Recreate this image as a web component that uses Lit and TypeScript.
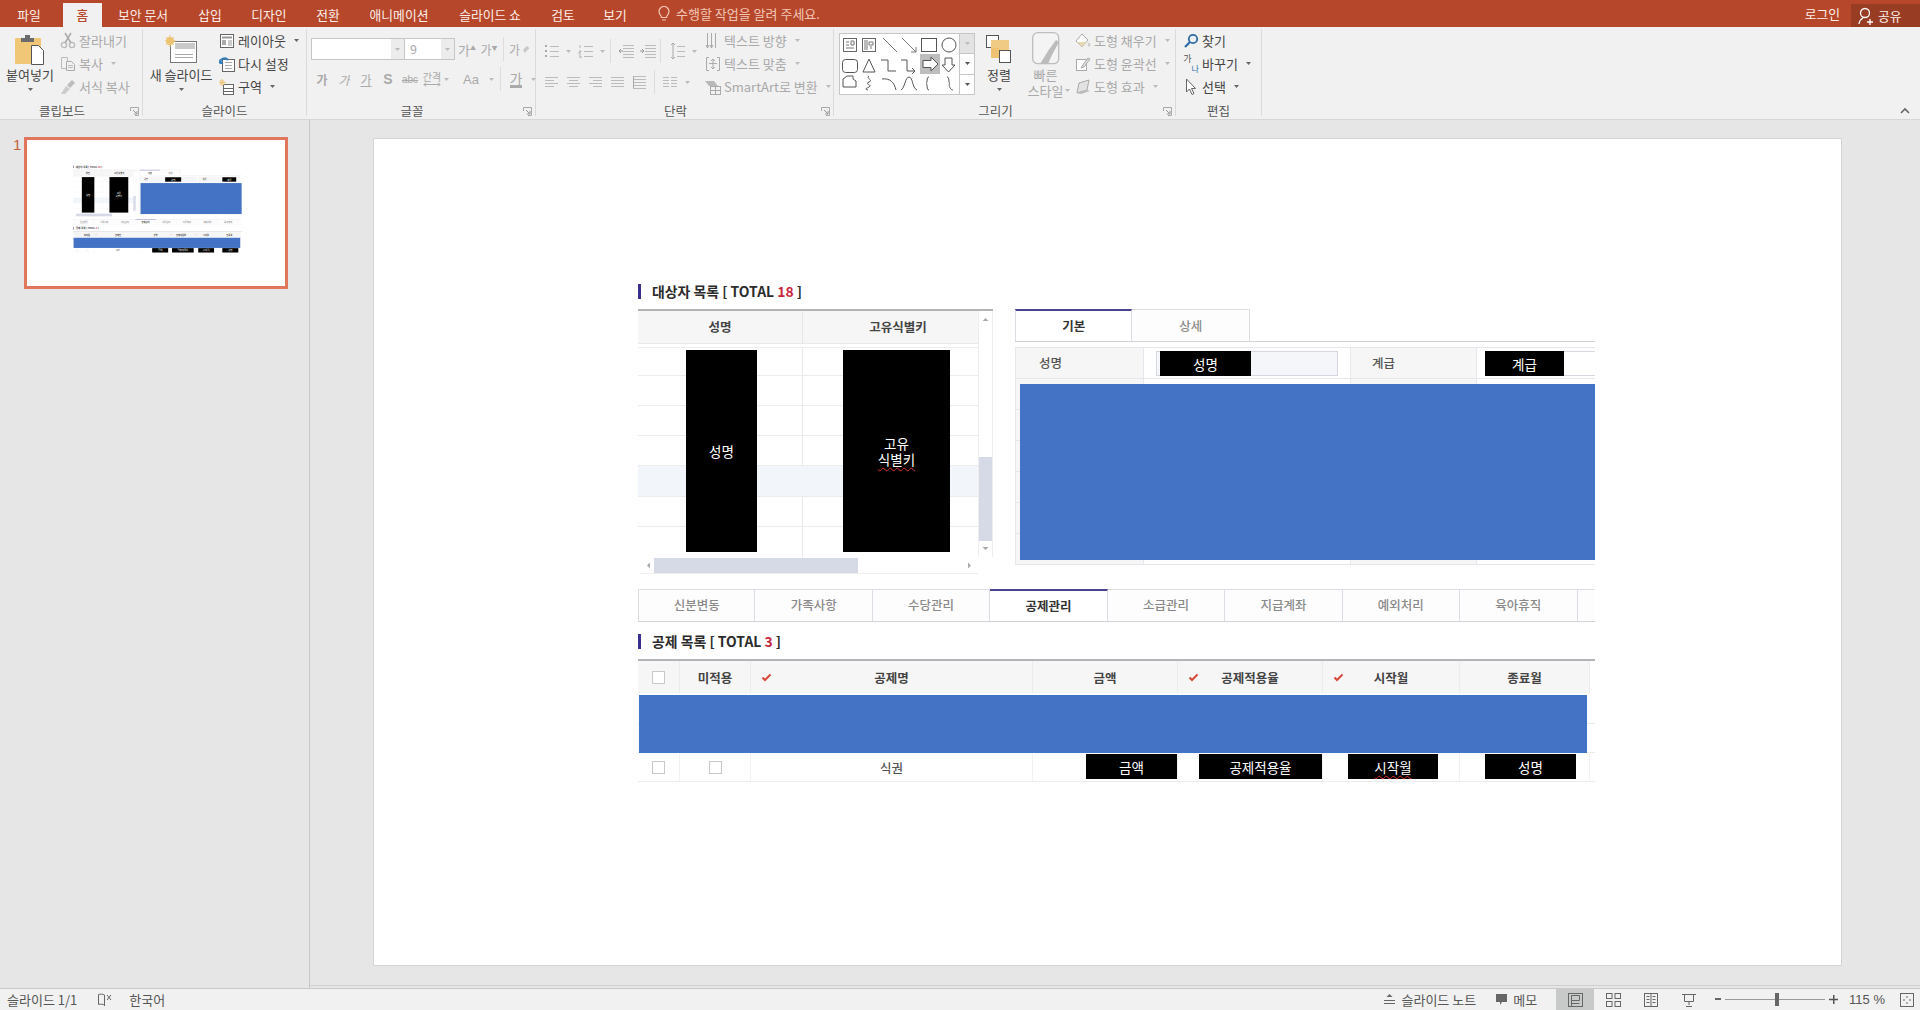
import { LitElement, html, svg, css } from "lit";
import { customElement } from "lit/decorators.js";

const caret = (c = "#888") => html`<svg class="caret" width="7" height="5" viewBox="0 0 7 5"><path d="M1 1h5L3.5 4z" fill=${c}/></svg>`;
const ic = (w: number, h: number, body: unknown) => html`<svg width=${w} height=${h} viewBox="0 0 ${w} ${h}" fill="none">${body}</svg>`;
const lines = (ys: number[], x1: number, x2: number, c = "#aaa") => ys.map((y) => svg`<path d="M${x1} ${y}.5H${x2}" stroke=${c}/>`);

const launcher = html`<svg class="launcher" width="9" height="9" viewBox="0 0 9 9" fill="none"><path d="M.5 4V.5H8.5V8.5H5" stroke="#aaa"/><path d="M3 3l4 4M4 7h3V4" stroke="#999"/></svg>`;

const icons = {
  paste: ic(30, 31, svg`<rect x="0" y="4" width="26" height="26" rx="1" fill="#efc777"/><path d="M6 4h4V1h5v3h4v4H6z" fill="#6b6b6b"/><path d="M16.5 11.5h7l5 5v14h-12z" fill="#fff" stroke="#555"/>`),
  cut: ic(16, 17, svg`<circle cx="4" cy="13" r="2.6" stroke="#bbb" stroke-width="1.4"/><circle cx="12" cy="13" r="2.6" stroke="#bbb" stroke-width="1.4"/><path d="M5 11L11 1M11 11L5 1" stroke="#aaa" stroke-width="1.5"/>`),
  copy: ic(16, 16, svg`<path d="M1.5 1.5h6v11h-6z" stroke="#bbb"/><path d="M6.5 5.5h5l3 3v6h-8z" fill="#f1f1f1" stroke="#aaa"/><path d="M8 9.5h5M8 11.5h5" stroke="#bbb"/>`),
  brush: ic(16, 16, svg`<path d="M1 15l5-8 4 3-5 5z" fill="#ccc"/><path d="M7 6l5-5 3 3-5 5z" fill="#bdbdbd"/>`),
  newSlide: ic(32, 30, svg`<rect x="5.5" y="6.5" width="26" height="21" fill="#fff" stroke="#777"/><rect x="10" y="8" width="20" height="6" fill="#c9c9c9"/><path d="M10 19.5h18M10 22.5h18" stroke="#aaa"/><circle cx="5" cy="6" r="4" fill="#eec270"/><path d="M5 0v12M-1 6h12M1 2l8 8M9 2l-8 8" stroke="#eec270"/>`),
  layout: ic(16, 16, svg`<rect x="1.5" y="1.5" width="13" height="13" fill="#fff" stroke="#666"/><path d="M3 4.5h10" stroke="#999" stroke-width="2"/><path d="M3 7h4v5H3z" fill="#aaa"/><path d="M9 8h4M9 10h4M9 12h4" stroke="#999"/>`),
  reset: ic(16, 16, svg`<rect x="3.5" y="3.5" width="12" height="12" fill="#fff" stroke="#666"/><path d="M6 6.5h7M6 9.5h7M6 12.5h7" stroke="#aaa"/><path d="M1 7a4.5 4.5 0 0 1 8-3" stroke="#2f7fbf" stroke-width="2"/><path d="M.5 3v5h4z" fill="#2f7fbf"/>`),
  section: ic(16, 16, svg`<rect x="4.5" y="5.5" width="10" height="10" fill="#fff" stroke="#666"/><path d="M4 9.5h11M4 12.5h11" stroke="#666"/><path d="M3 0v7M0 3.5h7M1 1l4 5M5 1L1 6" stroke="#eec270"/>`),
  dirText: ic(16, 18, svg`<path d="M2.5 1v15M6.5 1v15M10.5 1v15" stroke="#aaa"/><path d="M1 13l1.5 3L4 13M5 13l1.5 3L8 13" stroke="#aaa"/>`),
  fitText: ic(16, 16, svg`<path d="M4 1.5H1.5v13H4M12 1.5h2.5v13H12" stroke="#aaa"/><path d="M8 3v10M6 5l2-2 2 2M6 11l2 2 2-2M4 7.5h8" stroke="#aaa"/>`),
  smartArt: ic(16, 16, svg`<path d="M0 2h9l4 5H4z" fill="#b9b9b9"/><rect x="5.5" y="7.5" width="10" height="8" fill="#f1f1f1" stroke="#aaa"/><path d="M6 11.5h9M10.5 8v7" stroke="#aaa"/>`),
  fill: ic(16, 16, svg`<path d="M7 1l6 6-6 7-6-6z" fill="#fff" stroke="#aaa"/><path d="M2 9h10l-5 5z" fill="#e7d7b3"/><path d="M14 9l1.5 3a1.5 1.5 0 1 1-3 0z" fill="#ccc"/>`),
  outline: ic(16, 16, svg`<rect x="1.5" y="3.5" width="10" height="11" stroke="#aaa" fill="#fff"/><path d="M7 10l6-8 2 1-6 8-3 1z" fill="#ddd" stroke="#aaa"/>`),
  effect: ic(16, 16, svg`<path d="M2 14l2-10 10-3-2 10z" fill="#e2e2e2" stroke="#aaa"/><path d="M2 14l10-3 3 1-9 3z" fill="#bbb"/>`),
  find: ic(16, 16, svg`<circle cx="10" cy="6" r="4.2" stroke="#2a6aa8" stroke-width="1.8"/><path d="M7 9l-5 5" stroke="#2a6aa8" stroke-width="2.2"/>`),
  replace: html`<span class="rp"><span class="rp1">가</span><span class="rp2">나</span></span>`,
  select: ic(16, 18, svg`<path d="M3.5 1v13l3-3 2.5 5.5 2-1-2.5-5h4z" fill="#fff" stroke="#666"/>`),
  order: ic(26, 30, svg`<rect x=".5" y=".5" width="12" height="12" fill="#fff" stroke="#555"/><rect x="5" y="5" width="18" height="18" fill="#f0cb84" /><rect x="13.5" y="15.5" width="11" height="12" fill="#fff" stroke="#555"/><rect x="5" y="13" width="8" height="10" fill="#eec270"/>`),
  quick: ic(28, 33, svg`<rect x=".7" y=".7" width="26" height="31" rx="5" fill="#f4f4f4" stroke="#bdbdbd" stroke-width="1.3"/><path d="M8 32l8-13 8-11 3 2-7 13-4 9z" fill="#bcbcbc"/>`),
};

const alignIc = (kind: string) => {
  const short = kind === "l" ? [0, 9] : kind === "c" ? [2, 11] : kind === "r" ? [4, 13] : [0, 13];
  const rows = [[0, 13], short, [0, 13], short];
  return ic(13, 12, rows.map((r, i) => svg`<path d="M${r[0]} ${i * 3 + 1}.5H${r[1]}" stroke="#bbb"/>`));
};

const para = {
  bullets: ic(15, 14, svg`<path d="M1 2h2M1 7h2M1 12h2" stroke="#aaa" stroke-width="2"/><path d="M6 2.5h9M6 7.5h9M6 12.5h9" stroke="#bbb"/>`),
  numbers: ic(15, 14, svg`<path d="M2 1v3M1 7h2v1H1v2h2M1 12h2v2H1" stroke="#aaa" stroke-width=".8"/><path d="M6 2.5h9M6 7.5h9M6 12.5h9" stroke="#bbb"/>`),
  outdent: ic(16, 14, svg`${lines([1, 4, 7, 10, 13], 5, 16, "#bbb")}<path d="M5 7H1m2-2L1 7l2 2" stroke="#999"/>`),
  indent: ic(16, 14, svg`${lines([1, 4, 7, 10, 13], 5, 16, "#bbb")}<path d="M0 7h4M2 5l2 2-2 2" stroke="#999"/>`),
  spacing: ic(15, 18, svg`<path d="M3 1v16M1 3l2-2 2 2M1 15l2 2 2-2" stroke="#aaa"/><path d="M7 4.5h8M7 9.5h8M7 14.5h8" stroke="#bbb"/>`),
  columns: ic(14, 12, svg`${lines([1, 4, 7, 10], 0, 6, "#bbb")}${lines([1, 4, 7, 10], 8, 14, "#bbb")}`),
  dist: ic(13, 14, svg`${lines([1, 4, 7, 10, 13], 0, 13, "#bbb")}<path d="M.5 1v12" stroke="#aaa"/>`),
};

const gallery = svg`
  <rect x="81" y="21" width="20" height="20" fill="#bdbdbd"/>
  <rect x="4.5" y="5.5" width="13" height="13" stroke="#666"/><path d="M7 9h3M7 12h3M7 15h8M12 8h3v4h-3z" stroke="#777"/>
  <rect x="23.5" y="5.5" width="13" height="13" stroke="#666"/><path d="M26 7v10M28 7v10M30 9h4v3h-4zM32 13v3" stroke="#777"/>
  <path d="M44 5l14 14" stroke="#777"/>
  <path d="M63 5l14 14M72 19h5v-5" stroke="#777"/>
  <rect x="82.5" y="5.5" width="15" height="13" stroke="#555"/>
  <circle cx="110" cy="12" r="7" stroke="#555"/>
  <rect x="3.5" y="26.5" width="15" height="13" rx="3" stroke="#555"/>
  <path d="M30 26l6 13H24z" stroke="#555"/>
  <path d="M42 27h7v11h8" stroke="#555"/>
  <path d="M62 27h6v11h7M73 35l3 3-3 3" stroke="#555"/>
  <path d="M84 27.5h8V24l7 7-7 7v-3.5h-8z" fill="#fff" stroke="#555"/>
  <path d="M106 25h7v7h3l-6.500 7-6.500-7h3z" stroke="#555"/>
  <path d="M4 54v-8l4-3h6v3l3 2v6z" stroke="#555"/>
  <path d="M30 43c-4 2 5 4 0 6s4 3 0 5-4 2-1 3" stroke="#555"/>
  <path d="M43 46c8-1 12 3 14 11" stroke="#555"/>
  <path d="M62 57c4-2 4-13 8-13s3 11 8 13" stroke="#555"/>
  <path d="M90 44c-3 0-1 6-3 6.500 2 .5 0 6.500 3 6.500" stroke="#555"/>
  <path d="M108 44c3 0 1 6 3 6.500-2 .5 0 6.500 3 6.500" stroke="#555"/>
`;

@customElement("slide-body")
class SlideBody extends LitElement {
  static styles = css`
    :host { display: block; width: 1467px; height: 826px; background: #fff; padding: 142px 0 0 264px; box-sizing: border-box; font-family: "Noto Sans CJK KR", "Noto Sans", sans-serif; color: #333; }
    .content { width: 957px; }
    .title { display: flex; align-items: center; height: 20px; gap: 11px; font-size: 13.900px; font-weight: 700; color: #2b2b2b; white-space: pre; }
    .title::before { content: ""; width: 3px; height: 15px; background: #38308a; }
    .title em { font-style: normal; color: #c8283f; }
    .title.t2 { margin-top: 9px; }
    .top { display: flex; gap: 22px; margin-top: 8px; height: 264px; }
    .list { position: relative; width: 355px; flex: none; border-top: 2px solid #b4b4b4; display: grid; grid-template-columns: 340px 15px; grid-template-rows: 246px 17px; box-sizing: border-box; height: 264px; }
    .list-body { display: flex; flex-direction: column; background: linear-gradient(#e8e8e8, #e8e8e8) 164px 0 / 1px 100% no-repeat; }
    .list-head { display: grid; grid-template-columns: 164px 176px; height: 32px; background: #f6f6f6; border-bottom: 1px solid #e9e9e9; font-size: 12.5px; font-weight: 700; color: #444; text-align: center; line-height: 31px; box-shadow: 0 3px 0 #fff, 0 4px 0 #eee; }
    .list-head span + span { border-left: 1px solid #e6e6e6; padding-left: 15px; }
    .list-row { height: 30px; box-sizing: border-box; border-bottom: 1px solid #ececec; flex: none; }
    .list-row.first { height: 32px; }
    .list-row.sel { background: #f2f6fb; height: 31px; }
    .vs { background: #fff; border: 1px solid #eee; border-width: 0 1px; display: flex; flex-direction: column; align-items: center; justify-content: space-between; position: relative; padding: 6px 0; box-sizing: border-box; }
    .vs i { position: absolute; left: 0; right: 0; top: 146px; height: 84px; background: #d5dae6; }
    .hs { background: #fff; border-bottom: 1px solid #eee; display: flex; align-items: center; margin-left: 2px; position: relative; }
    .hs i { display: block; height: 15px; width: 204px; margin-left: 14px; background: #d5dae6; }
    .hs svg { position: absolute; }
    .hs svg.a { left: 6px; } .hs svg.b { right: 6px; }
    .mask { position: absolute; background: #000; color: #fff; font-size: 13.500px; display: flex; align-items: center; justify-content: center; text-align: center; line-height: 16px; }
    .m1 { left: 48px; top: 39px; width: 71px; height: 202px; }
    .m2 { left: 205px; top: 39px; width: 107px; height: 202px; }
    .sq { text-decoration: underline wavy #e0322a 1px; text-underline-offset: 2px; }
    .right { width: 580px; flex: none; position: relative; }
    .tabs { display: flex; height: 33px; box-sizing: border-box; border-bottom: 1px solid #d2d2d8; font-size: 12.5px; color: #8a8a8a; font-weight: 500; }
    .tab { flex: none; box-sizing: border-box; border: 1px solid #dcdce4; border-bottom: 0; border-left-width: 0; text-align: center; line-height: 31px; background: #fdfdfd; }
    .tab:first-child { border-left-width: 1px; }
    .tab.on { border-top: 2px solid #4b4590; color: #333; font-weight: 700; background: #fff; line-height: 30px; }
    .tab.w { width: 117.450px; }
    .tab.filler { flex: 1; border-right: 0; }
    .form { position: relative; margin-top: 5px; border-top: 1px solid #e6e6ec; }
    .frow { display: grid; grid-template-columns: 129px 206px 127px 118px; height: 31px; box-sizing: border-box; border-bottom: 1px solid #e6e6ec; font-size: 12.5px; font-weight: 500; color: #555; }
    .lab { background: #f6f6f6; line-height: 30px; padding-left: 23px; border-left: 1px solid #e9e9e9; border-right: 1px solid #e6e6ec; }
    .lab.l2 { padding-left: 21px; }
    .val { padding: 3px 0 0 12px; }
    .val .inp { display: block; height: 25px; width: 182px; box-sizing: border-box; border: 1px solid #d5d6e2; background: #f5f6fa; position: relative; }
    .val.v2 { padding-left: 8px; }
    .val.v2 .inp { width: 110px; border-width: 1px 0; background: #fff; }
    .inline-mask { position: absolute; left: 3px; top: -1px; bottom: -1px; background: #000; color: #fff; font-size: 13.500px; font-weight: 400; display: flex; align-items: center; justify-content: center; }
    .im1 { width: 91px; } .im2 { left: 0; width: 79px; }
    .form .blue { position: absolute; left: 5px; top: 36px; width: 575px; height: 176px; background: #4472c4; }
    .tabs2 { margin-top: 16px; color: #8a8a8a; }
    .tabs2 .tab { line-height: 30px; }
    .table { margin-top: 8px; border-top: 2px solid #b4b4b8; }
    .trow { display: grid; grid-template-columns: 42px 71px 282px 145px 145px 137px 130px; font-size: 12.500px; color: #444; }
    .thead { height: 32px; background: #f6f6f6; font-weight: 700; width: 952px; margin-bottom: 2px; }
    .thead > div { display: flex; align-items: center; justify-content: center; border-right: 1px solid #ececec; position: relative; }
    .tk { position: absolute; top: 12px; left: 10px; }
    .tbody { position: relative; }
    .tbody .blue { position: absolute; left: 1px; top: 0; width: 948px; height: 58px; background: #4472c4; }
    .tbr { height: 29px; box-sizing: border-box; border-bottom: 1px solid #ececec; width: 957px; }
    .tbr > div { display: flex; align-items: center; justify-content: center; border-right: 1px solid #f1f1f1; }
    .tbr > div.box { justify-content: flex-start; }
    .box .bm { display: flex; align-items: center; justify-content: center; height: 25px; background: #000; color: #fff; font-size: 13.500px; margin-top: -1px; }
    .cb { width: 13px; height: 13px; box-sizing: border-box; border: 1px solid #c9c9c9; background: #fff; box-shadow: inset 0 0 1px #eee; }
    .cell-name { font-weight: 500; color: #555; }
  `;
  render() {
    const chk = html`<svg class="tk" width="11" height="9" viewBox="0 0 11 9"><path d="M1.500 4.500L4 7l5.500-5.500" stroke="#d8493a" stroke-width="2" fill="none"/></svg>`;
    const arrow = (d: string) => html`<svg width="7" height="5" viewBox="0 0 7 5"><path d=${d} fill="#aaa"/></svg>`;
    const boxes = [
      { t: "금액", ml: 53, w: 91 },
      { t: "공제적용율", ml: 21, w: 124 },
      { t: "시작월", ml: 25, w: 90, sq: true },
      { t: "성명", ml: 25, w: 91 },
    ];
    const w2 = ["신분변동", "가족사항", "수당관리", "공제관리", "소급관리", "지급계좌", "예외처리", "육아휴직"];
    return html`<div class="content">
      <div class="title"><span>대상자 목록 [ TOTAL <em>18</em> ]</span></div>
      <div class="top">
        <div class="list">
          <div class="list-body">
            <div class="list-head"><span>성명</span><span>고유식별키</span></div>
            <div class="list-row first"></div><div class="list-row"></div><div class="list-row"></div><div class="list-row"></div>
            <div class="list-row sel"></div><div class="list-row"></div>
          </div>
          <div class="vs"><i></i>${arrow("M3.500 1l3 3H.5z")}${arrow("M.5 1h6l-3 3z")}</div>
          <div class="hs"><svg class="a" width="5" height="7" viewBox="0 0 5 7"><path d="M4 .5v6L1 3.500z" fill="#aaa"/></svg><i></i><svg class="b" width="5" height="7" viewBox="0 0 5 7"><path d="M1 .5v6l3-3z" fill="#aaa"/></svg></div>
          <div></div>
          <div class="mask m1">성명</div>
          <div class="mask m2"><div>고유<br><span class="sq">식별키</span></div></div>
        </div>
        <div class="right">
          <div class="tabs">
            <div class="tab on w">기본</div><div class="tab w">상세</div>
          </div>
          <div class="form">
            <div class="frow"><div class="lab">성명</div><div class="val"><span class="inp"><span class="inline-mask im1">성명</span></span></div><div class="lab l2">계급</div><div class="val v2"><span class="inp"><span class="inline-mask im2">계급</span></span></div></div>
            ${[0, 1, 2, 3, 4, 5].map(() => html`<div class="frow"><div class="lab"></div><div class="val"></div><div class="lab"></div><div class="val"></div></div>`)}
            <div class="blue"></div>
          </div>
        </div>
      </div>
      <div class="tabs tabs2">
        ${w2.map((t, i) => html`<div class="tab w ${i === 3 ? "on" : ""}">${t}</div>`)}
        <div class="tab filler"></div>
      </div>
      <div class="title t2"><span>공제 목록 [ TOTAL <em>3</em> ]</span></div>
      <div class="table">
        <div class="trow thead">
          <div><span class="cb"></span></div><div>미적용</div>
          <div>${chk}공제명</div><div>금액</div>
          <div>${chk}공제적용율</div>
          <div>${chk}시작월</div><div>종료월</div>
        </div>
        <div class="tbody">
          <div class="tbr"></div><div class="tbr"></div>
          <div class="trow tbr">
            <div><span class="cb"></span></div><div><span class="cb"></span></div><div class="cell-name">식권</div>
            ${boxes.map((b) => html`<div class="box"><div class="bm" style="margin-left:${b.ml}px;width:${b.w}px"><span class=${b.sq ? "sq" : ""}>${b.t}</span></div></div>`)}
          </div>
          <div class="blue"></div>
        </div>
      </div>
    </div>`;
  }
}

const row = (icon: unknown, text: string, opts: { off?: boolean; caret?: boolean } = {}) => html`<div class="r ${opts.off ? "off" : ""}"><span class="ri">${icon}</span><span>${text}</span>${opts.caret ? caret(opts.off ? "#bbb" : "#666") : ""}</div>`;

@customElement("app-root")
class AppRoot extends LitElement {
  static styles = css`
    :host { display: flex; flex-direction: column; width: 1920px; height: 1010px; overflow: hidden; background: #e6e6e6; font-family: "Noto Sans CJK KR", "Noto Sans", sans-serif; font-size: 13px; color: #444; }
    .tbar { height: 27px; flex: none; background: #b7472a; color: #fbeee9; display: flex; align-items: flex-end; font-size: 12.800px; box-sizing: border-box; }
    .tbar .t { height: 24px; line-height: 23px; text-align: center; flex: none; }
    .tbar .t.on { background: #f1f1f1; color: #b7472a; font-weight: 500; margin-left: 5px; }
    .tell { display: flex; align-items: center; gap: 6px; margin-left: 18px; height: 27px; color: #f2c6b6; white-space: pre; font-size: 13px; }
    .login { margin-left: auto; height: 27px; line-height: 27px; margin-right: 11px; }
    .share { width: 69px; height: 23px; background: #983c24; display: flex; align-items: center; padding-left: 7px; gap: 4px; box-sizing: border-box; }
    .ribbon { height: 93px; flex: none; box-sizing: border-box; background: #f1f1f1; border-bottom: 1px solid #d6d6d6; display: flex; position: relative; white-space: nowrap; }
    .g { flex: none; height: 87px; margin-top: 2px; border-right: 1px solid #dadada; position: relative; }
    .gb { height: 74px; display: flex; align-items: flex-start; box-sizing: border-box; }
    .gl { text-align: center; height: 16px; line-height: 16px; color: #555; font-size: 12.500px; }
    .gl.lnch { padding-right: 18px; }
    .launcher { position: absolute; right: 3px; bottom: 0; }
    .big { display: flex; flex-direction: column; align-items: center; flex: none; line-height: 16px; color: #444; position: relative; }
    .big .bi { height: 36px; display: flex; align-items: flex-end; justify-content: center; }
    .big .bl { margin-top: 2px; }
    .big .caret { margin-top: 4px; }
    .big.off { color: #a9a9a9; line-height: 16px; }
    .big.off .caret { position: absolute; right: -5px; bottom: 6px; }
    .stack { display: flex; flex-direction: column; flex: none; }
    .r { height: 23px; display: flex; align-items: center; gap: 3px; color: #444; }
    .r .caret { margin-left: 4px; }
    .r.off { color: #a9a9a9; }
    .ri { width: 16px; height: 20px; display: flex; align-items: center; justify-content: center; flex: none; }
    .rp { display: flex; align-items: flex-start; line-height: 10px; height: 20px; }
    .rp1 { font-size: 9px; color: #555; }
    .rp2 { font-size: 8px; color: #2a6aa8; margin-top: 10px; }
    .pad-clip { padding-left: 6px; }
    .combo { display: flex; box-sizing: border-box; height: 22px; border: 1px solid #c6c6c6; background: #fff; flex: none; color: #aaa; font-size: 12.500px; line-height: 20px; }
    .combo + .combo { border-left: 0; }
    .combo .in { flex: 1; padding-left: 5px; }
    .combo .dd { width: 13px; background: #ececec; display: flex; align-items: center; justify-content: center; }
    .fgrid { display: flex; flex-direction: column; padding: 9px 0 0 4px; }
    .frow1, .frow2 { display: flex; align-items: center; height: 22px; }
    .frow2 { margin-top: 7px; height: 24px; }
    .slot { width: 22px; display: flex; align-items: center; justify-content: center; flex: none; color: #a9a9a9; position: relative; font-size: 12px; }
    .sep { width: 1px; height: 24px; background: #dcdcdc; flex: none; }
    .lg { font-size: 13px; }
    .caret-w { width: 12px; display: flex; justify-content: center; flex: none; }
    .pgrid { padding: 11px 0 0 4px; display: flex; flex-direction: column; flex: none; width: 165px; box-sizing: content-box; }
    .pr { display: flex; align-items: center; height: 22px; }
    .pr + .pr { margin-top: 9px; }
    .gal { margin: 4px 0 0 5px; width: 136px; height: 62px; box-sizing: border-box; border: 1px solid #c6c6c6; background: #fff; display: flex; flex: none; }
    .gal svg.s { flex: none; margin: -1px 0 0 -1px; }
    .gals { width: 15px; margin-left: auto; border-left: 1px solid #c6c6c6; display: flex; flex-direction: column; }
    .gals div { flex: 1; display: flex; align-items: center; justify-content: center; }
    .gals div:first-child { background: #e3e3e3; border-bottom: 1px solid #c6c6c6; }
    .gals div:last-child { border-top: 1px solid #c6c6c6; }
    .collapse { position: absolute; right: 10px; bottom: 5px; }
    .main { flex: 1; display: flex; min-height: 0; }
    .pane { width: 310px; flex: none; border-right: 1px solid #c6c6c6; padding: 17px 0 0 13px; display: flex; gap: 6px; box-sizing: border-box; align-items: flex-start; }
    .num { color: #c5603f; font-size: 15px; line-height: 20px; margin-top: -2px; font-family: "Liberation Sans", sans-serif; width: 5px; }
    .thumb { width: 258px; height: 146px; border: 3px solid #e0775c; overflow: hidden; flex: none; background: #fff; }
    .thumb slide-body { transform: scale(0.1758); transform-origin: 0 0; }
    .stage { flex: 1; padding: 19px 0 0 64px; border-bottom: 1px solid #cfcfcf; margin-bottom: 2px; box-sizing: border-box; overflow: hidden; }
    .sl { box-shadow: 0 0 0 1px #d4d4d4; width: 1467px; }
    .status { height: 22px; flex: none; background: #f1f1f1; border-top: 1px solid #c9c9c9; box-sizing: border-box; display: flex; align-items: center; font-size: 13px; color: #555; padding-left: 7px; white-space: pre; }
    .st-l { display: flex; align-items: center; }
    .st-r { margin-left: auto; display: flex; align-items: center; height: 100%; }
    .vbtn { width: 38px; height: 100%; display: flex; align-items: center; justify-content: center; flex: none; }
    .vbtn.on { background: #c8caca; }
    .slider { width: 100px; height: 1px; background: #9a9a9a; position: relative; margin: 0 4px; }
    .slider i { position: absolute; left: 50px; top: -6px; width: 4px; height: 13px; background: #666; }
    .book { margin: 0 17px 0 20px; }
    .nt { margin: 0 20px 0 6px; }
    .mm { margin: 0 19px 0 6px; }
    .mn { margin-left: 7px; }
    .zm { margin: 0 15px 0 11px; font-family: "Liberation Sans", sans-serif; }
    .fit { margin-right: 6px; }
    .s-b { font-family: "Liberation Sans", sans-serif; font-weight: 700; font-size: 14px; }
    .s-s { font-size: 10px; text-decoration: line-through; font-family: "Liberation Sans", sans-serif; }
    .gap { display: flex; flex-direction: column; align-items: center; line-height: 10px; font-size: 10px; }
    .aa { width: 22px; justify-content: flex-start; font-size: 13px; font-family: "Liberation Sans", sans-serif; }
    .col { border-bottom: 3px solid #aaa; line-height: 14px; font-size: 14px; }
    .up { font-size: 6px; vertical-align: 5px; }
    .sp1 { width: 1px; flex: none; } .sp2 { width: 2px; flex: none; } .sp3 { width: 3px; flex: none; } .sp4 { width: 4px; flex: none; } .sp5 { width: 5px; flex: none; } .sp13 { width: 13px; flex: none; }
    .b48 { width: 48px; } .b76 { width: 76px; } .b44 { width: 44px; margin-left: 2px; } .b41 { width: 41px; margin-left: 4px; }
    .s6 { margin-left: 6px; } .s9 { margin-left: 9px; }
    .p7 { padding-left: 7px; }
    .c94 { width: 94px; } .c50 { width: 50px; }
  `;

  render() {
    const tabs: [string, number, boolean?][] = [["파일", 58], ["홈", 39, true], ["보안 문서", 82], ["삽입", 52], ["디자인", 66], ["전환", 52], ["애니메이션", 90], ["슬라이드 쇼", 92], ["검토", 54], ["보기", 50]];
    const groupW = { clip: 142, slide: 163, font: 228, para: 297, draw: 341, edit: 85 };
    const c = (x = "#bbb") => html`<span class="caret-w">${caret(x)}</span>`;
    const slot = (b: unknown) => html`<span class="slot">${b}</span>`;
    const eraser = ic(14, 14, svg`<path d="M6 12l6-6-3-3-5 5z" fill="#c9c9c9"/>`);
    return html`
      <div class="tbar">
        ${tabs.map(([t, w, on]) => html`<div class="t ${on ? "on" : ""}" style="width:${w}px">${t}</div>`)}
        <div class="tell"><svg width="12" height="16" viewBox="0 0 12 16" fill="none"><path d="M3.500 11.500C3 9 1 8 1 5.500a5 5 0 0 1 10 0C11 8 9 9 8.500 11.500zM4 14h4" stroke="#f2c6b6" stroke-width="1.200"/></svg><span>수행할 작업을 알려 주세요.</span></div>
        <div class="login">로그인</div>
        <div class="share"><svg width="16" height="18" viewBox="0 0 16 18" fill="none"><circle cx="7" cy="6" r="4.500" stroke="#fff" stroke-width="1.300"/><path d="M1 17c.5-3 2-5 4-6M9 15h6M12 12v6" stroke="#fff" stroke-width="1.300"/></svg><span>공유</span></div>
      </div>

      <div class="ribbon">
        <div class="g" style="width:${groupW.clip}px">
          <div class="gb pad-clip">
            <div class="big b48"><span class="bi">${icons.paste}</span><span class="bl">붙여넣기</span>${caret("#666")}</div>
            <div class="stack s6">
              ${row(icons.cut, "잘라내기", { off: true })}
              ${row(icons.copy, "복사", { off: true, caret: true })}
              ${row(icons.brush, "서식 복사", { off: true })}
            </div>
          </div>
          <div class="gl lnch">클립보드</div>${launcher}
        </div>

        <div class="g" style="width:${groupW.slide}px">
          <div class="gb">
            <div class="big b76"><span class="bi">${icons.newSlide}</span><span class="bl">새 슬라이드</span>${caret("#666")}</div>
            <div class="stack">
              ${row(icons.layout, "레이아웃", { caret: true })}
              ${row(icons.reset, "다시 설정")}
              ${row(icons.section, "구역", { caret: true })}
            </div>
          </div>
          <div class="gl">슬라이드</div>
        </div>

        <div class="g" style="width:${groupW.font}px">
          <div class="gb fgrid">
            <div class="frow1">
              <div class="combo c94"><span class="in"></span><span class="dd">${caret("#bbb")}</span></div>
              <div class="combo c50"><span class="in">9</span><span class="dd">${caret("#bbb")}</span></div>
              <span class="sp1"></span>
              ${slot(html`<span class="lg">가<span class="up">▲</span></span>`)}
              ${slot(html`<span>가<span class="up">▼</span></span>`)}
              <span class="sp3"></span><span class="sep"></span><span class="sp5"></span>
              ${slot(html`<span>가</span>${eraser}`)}
            </div>
            <div class="frow2">
              ${slot(html`<b>가</b>`)}${slot(html`<i>가</i>`)}${slot(html`<u>가</u>`)}
              ${slot(html`<span class="s-b">S</span>`)}${slot(html`<span class="s-s">abc</span>`)}
              ${slot(html`<span class="gap">간격<svg width="18" height="5" viewBox="0 0 18 5" fill="none"><path d="M1 2.500h16M3 .5l-2 2 2 2M15 .5l2 2-2 2" stroke="#aaa"/></svg></span>`)}
              ${caret("#bbb")}<span class="sp13"></span>
              <span class="slot aa">Aa</span>${c()}
              <span class="sp3"></span><span class="sep"></span><span class="sp4"></span>
              ${slot(html`<span class="col">가</span>`)}${c()}
            </div>
          </div>
          <div class="gl lnch">글꼴</div>${launcher}
        </div>

        <div class="g" style="width:${groupW.para}px">
          <div class="gb">
            <div class="pgrid">
              <div class="pr">
                ${slot(para.bullets)}${c()}${slot(para.numbers)}${c()}<span class="sp2"></span><span class="sep"></span><span class="sp4"></span>
                ${slot(para.outdent)}${slot(para.indent)}<span class="sp1"></span><span class="sep"></span><span class="sp5"></span>
                ${slot(para.spacing)}${c()}
              </div>
              <div class="pr">
                ${slot(alignIc("l"))}${slot(alignIc("c"))}${slot(alignIc("r"))}${slot(alignIc("j"))}${slot(para.dist)}<span class="sp4"></span><span class="sep"></span><span class="sp4"></span>
                ${slot(para.columns)}${c()}
              </div>
            </div>
            <div class="stack">
              ${row(icons.dirText, "텍스트 방향", { off: true, caret: true })}
              ${row(icons.fitText, "텍스트 맞춤", { off: true, caret: true })}
              ${row(icons.smartArt, "SmartArt로 변환", { off: true, caret: true })}
            </div>
          </div>
          <div class="gl lnch">단락</div>${launcher}
        </div>

        <div class="g" style="width:${groupW.draw}px">
          <div class="gb">
            <div class="gal">
              <svg class="s" width="120" height="62" viewBox="0 0 120 62" fill="none">${gallery}</svg>
              <div class="gals"><div>${caret("#bbb")}</div><div>${caret("#555")}</div><div>${caret("#555")}</div></div>
            </div>
            <div class="big b44"><span class="bi">${icons.order}</span><span class="bl">정렬</span>${caret("#666")}</div>
            <div class="big off b41"><span class="bi">${icons.quick}</span><span class="bl">빠른</span><span>스타일</span>${caret("#bbb")}</div>
            <div class="stack s9">
              ${row(icons.fill, "도형 채우기", { off: true, caret: true })}
              ${row(icons.outline, "도형 윤곽선", { off: true, caret: true })}
              ${row(icons.effect, "도형 효과", { off: true, caret: true })}
            </div>
          </div>
          <div class="gl lnch">그리기</div>${launcher}
        </div>

        <div class="g" style="width:${groupW.edit}px">
          <div class="gb p7">
            <div class="stack">
              ${row(icons.find, "찾기")}
              ${row(icons.replace, "바꾸기", { caret: true })}
              ${row(icons.select, "선택", { caret: true })}
            </div>
          </div>
          <div class="gl">편집</div>
        </div>
        <svg class="collapse" width="10" height="7" viewBox="0 0 10 7" fill="none"><path d="M1 6l4-4 4 4" stroke="#666" stroke-width="1.600"/></svg>
      </div>

      <div class="main">
        <div class="pane">
          <div class="num">1</div>
          <div class="thumb"><slide-body></slide-body></div>
        </div>
        <div class="stage"><div class="sl"><slide-body></slide-body></div></div>
      </div>

      <div class="status">
        <div class="st-l"><span>슬라이드 1/1</span>
          <svg class="book" width="15" height="14" viewBox="0 0 15 14" fill="none"><path d="M7.500 2C6 1 3 1 1.500 1.500v10C3 11 6 11 7.500 12M7.500 2v11" stroke="#666"/><path d="M10 2l4 5M14 2l-4 5" stroke="#666"/></svg>
          <span>한국어</span></div>
        <div class="st-r">
          <svg width="11" height="13" viewBox="0 0 11 13" fill="none"><path d="M0 7.500h11M0 10.500h11" stroke="#666"/><path d="M5.500 1l3 3h-6z" fill="#666"/></svg>
          <span class="nt">슬라이드 노트</span>
          <svg width="11" height="12" viewBox="0 0 11 12"><path d="M0 0h11v8H6l-2 3V8H0z" fill="#666"/></svg>
          <span class="mm">메모</span>
          <div class="vbtn on"><svg width="15" height="14" viewBox="0 0 15 14" fill="none"><rect x=".5" y=".5" width="14" height="13" stroke="#666"/><path d="M3.500 2.500h8v5h-8zM3.500 10.500h8M3.500 3v10" stroke="#666"/></svg></div>
          <div class="vbtn"><svg width="15" height="14" viewBox="0 0 15 14" fill="none"><rect x=".5" y=".5" width="5.500" height="5" stroke="#666"/><rect x="9" y=".5" width="5.500" height="5" stroke="#666"/><rect x=".5" y="8.500" width="5.500" height="5" stroke="#666"/><rect x="9" y="8.500" width="5.500" height="5" stroke="#666"/></svg></div>
          <div class="vbtn"><svg width="14" height="14" viewBox="0 0 14 14" fill="none"><rect x=".5" y=".5" width="13" height="13" stroke="#666"/><path d="M7 .5v13M2.500 3.500h3M2.500 6.500h3M2.500 9.500h3M8.500 3.500h3M8.500 6.500h3M8.500 9.500h3" stroke="#666"/></svg></div>
          <div class="vbtn"><svg width="14" height="14" viewBox="0 0 14 14" fill="none"><path d="M0 1.500h14M2.500 2v6.500h9V2M7 9v3M4 13.500h6" stroke="#666"/></svg></div>
          <svg class="mn" width="6" height="3" viewBox="0 0 6 3"><path d="M0 0h6v2H0z" fill="#666"/></svg>
          <div class="slider"><i></i></div>
          <svg width="9" height="9" viewBox="0 0 9 9"><path d="M4 0h1.500v9H4zM0 3.700h9v1.500H0z" fill="#555"/></svg>
          <span class="zm">115 %</span>
          <svg class="fit" width="14" height="14" viewBox="0 0 14 14" fill="none"><rect x=".5" y=".5" width="13" height="13" stroke="#666"/><path d="M7 3v2M7 9v2M3 7h2M9 7h2" stroke="#666"/></svg>
        </div>
      </div>
    `;
  }
}
export { SlideBody, AppRoot };
